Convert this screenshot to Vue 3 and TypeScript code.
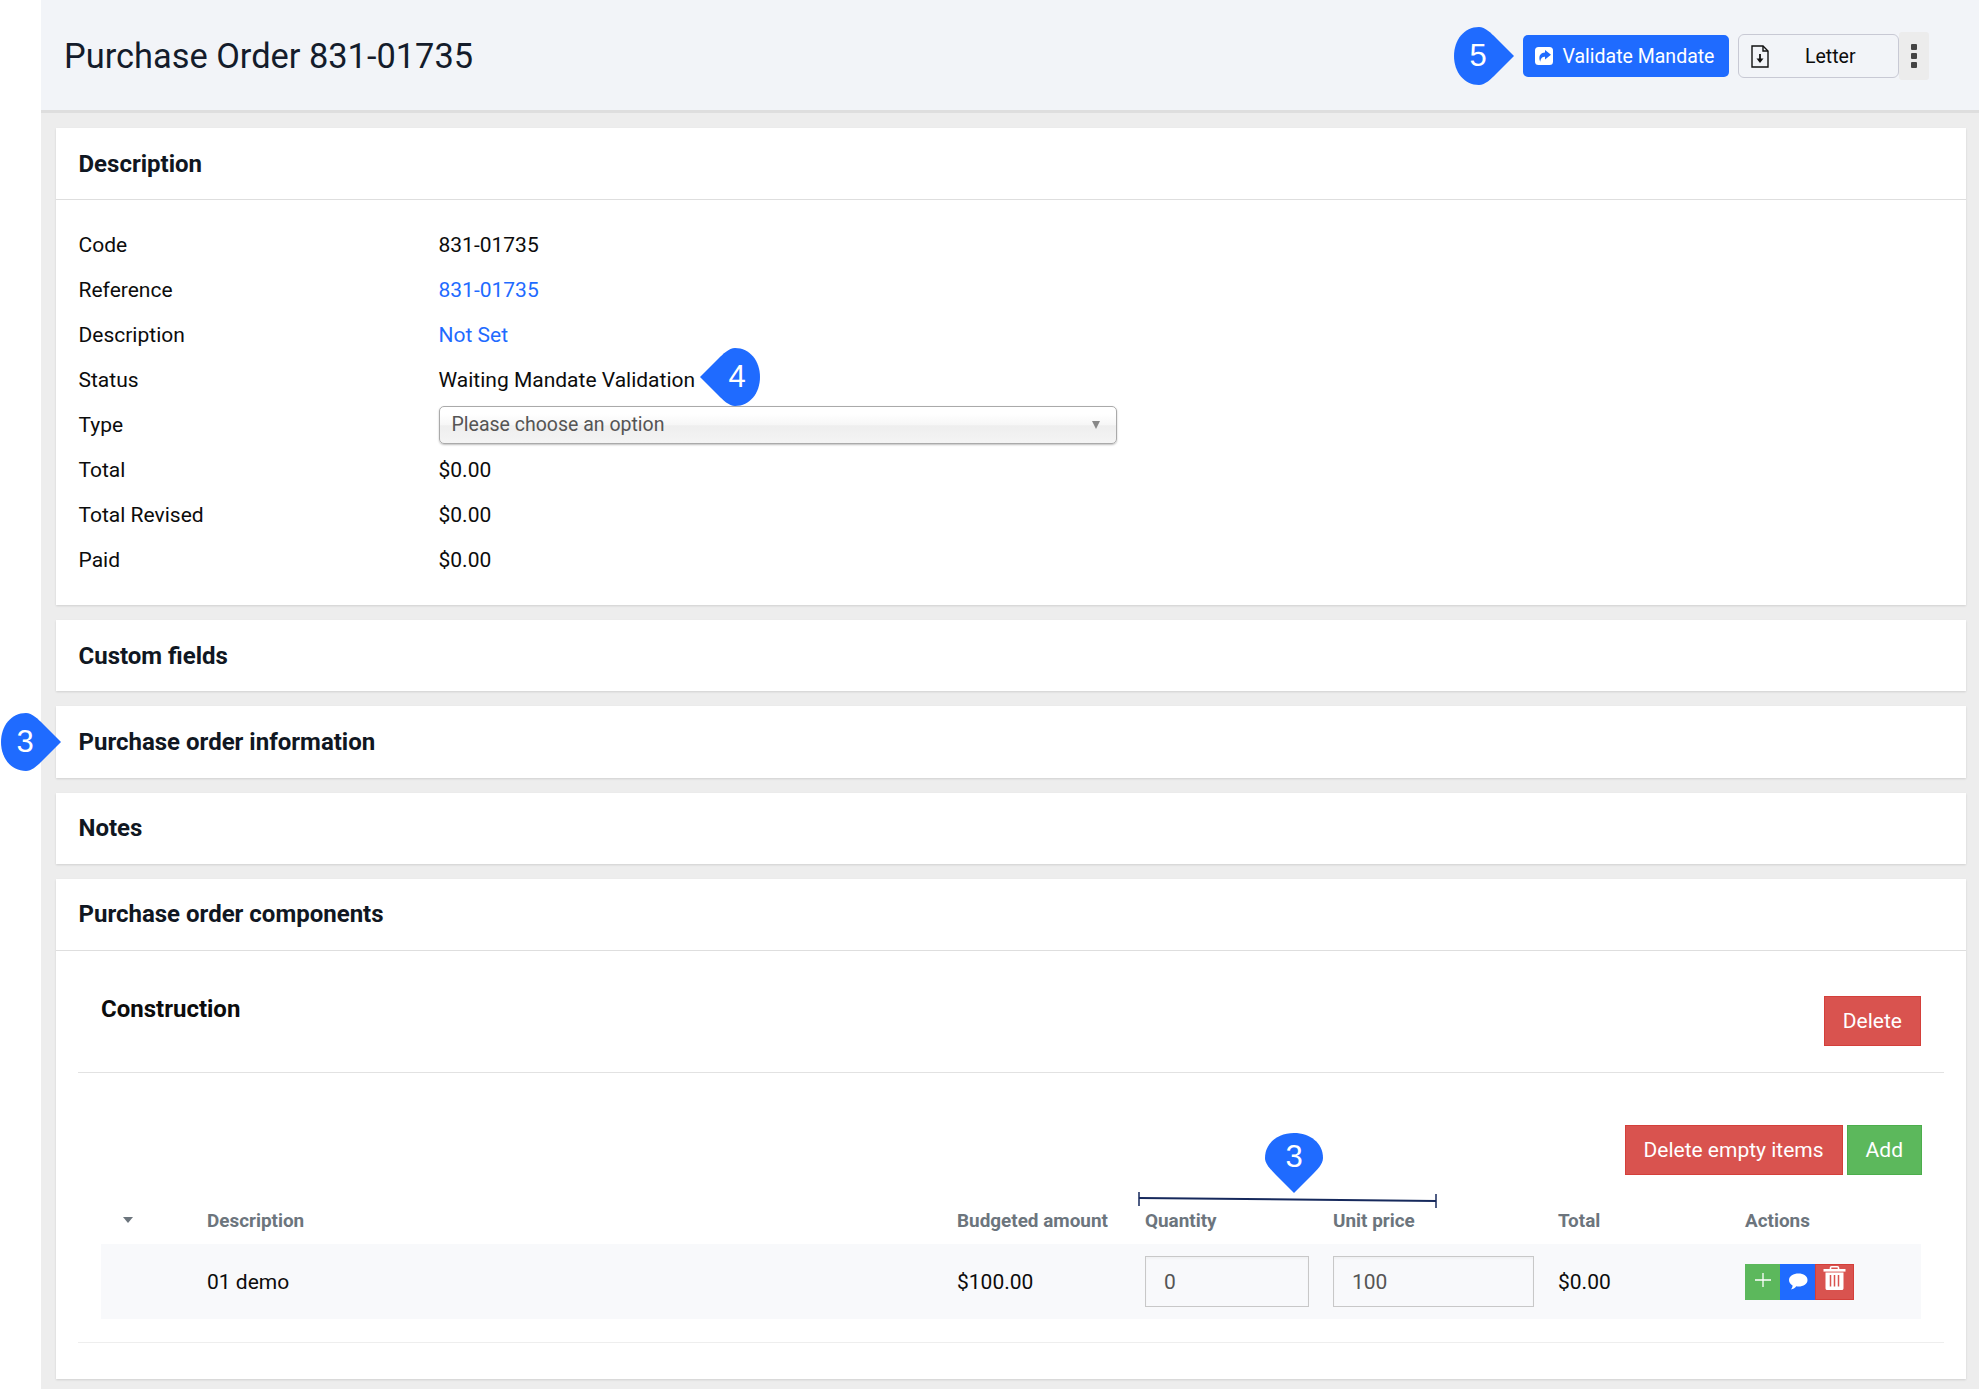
<script setup lang="ts">
const fields: { label: string; value: string; link?: boolean; select?: boolean }[] = [
  { label: 'Code', value: '831-01735' },
  { label: 'Reference', value: '831-01735', link: true },
  { label: 'Description', value: 'Not Set', link: true },
  { label: 'Status', value: 'Waiting Mandate Validation' },
  { label: 'Type', value: 'Please choose an option', select: true },
  { label: 'Total', value: '$0.00' },
  { label: 'Total Revised', value: '$0.00' },
  { label: 'Paid', value: '$0.00' }
]

const collapsed = ['Custom fields', 'Purchase order information', 'Notes']

const pinPath = 'M29 0C45 0 58 10 58 25C58 31 52 37 47 42L29 60L11 42C6 37 0 31 0 25C0 10 13 0 29 0Z'
</script>

<template>
  <div class="page">
    <aside class="rail"></aside>
    <main class="main">
      <header class="topbar">
        <h1>Purchase Order 831-01735</h1>
        <div class="top-actions">
          <div class="pin-slot">
            <div class="pin pin-right">
              <svg width="58" height="60" viewBox="0 0 58 60"><path :d="pinPath" /></svg>
              <span>5</span>
            </div>
          </div>
          <button class="btn-validate">
            <svg width="18" height="18" viewBox="0 0 18 18">
              <rect width="18" height="18" rx="3.5" fill="#fff" />
              <path d="M10 3l6 4.800-6 4.800V9.800C7.500 9.800 5.800 11 5.300 14.800 3 9.500 5.200 5.800 10 5.500Z" fill="#1f6bff" />
            </svg>
            Validate Mandate
          </button>
          <button class="btn-letter">
            <svg width="18" height="23" viewBox="0 0 18 23" fill="none" stroke="#111" stroke-width="1.4">
              <path d="M1 1h11L17 6V22H1Z" />
              <path d="M12 1v5h5" />
              <path d="M9 9v6" stroke-width="1.800" />
              <path d="M5.500 13.500h7L9 18Z" fill="#111" stroke="none" />
            </svg>
            <span>Letter</span>
          </button>
          <div class="kebab"><i></i><i></i><i></i></div>
        </div>
      </header>

      <div class="panels">
        <section class="panel">
          <h2 class="panel-head bordered">Description</h2>
          <div class="fields">
            <div v-for="f in fields" :key="f.label" class="field">
              <span class="field-label">{{ f.label }}</span>
              <div v-if="f.select" class="select">
                {{ f.value }}
                <span class="select-arrow"></span>
              </div>
              <span v-else class="field-value" :class="{ link: f.link }">
                {{ f.value }}
                <div v-if="f.label === 'Status'" class="pin pin-left">
                  <svg width="58" height="60" viewBox="0 0 58 60"><path :d="pinPath" /></svg>
                  <span>4</span>
                </div>
              </span>
            </div>
          </div>
        </section>

        <section v-for="title in collapsed" :key="title" class="panel">
          <h2 class="panel-head">
            {{ title }}
            <div v-if="title === 'Purchase order information'" class="pin pin-side">
              <svg width="58" height="60" viewBox="0 0 58 60"><path :d="pinPath" /></svg>
              <span>3</span>
            </div>
          </h2>
        </section>

        <section class="panel">
          <h2 class="panel-head bordered">Purchase order components</h2>
          <div class="component">
            <div class="component-head">
              <h3>Construction</h3>
              <button class="btn btn-red">Delete</button>
            </div>

            <div class="toolbar">
              <button class="btn btn-red">Delete empty items</button>
              <button class="btn btn-green">Add</button>
            </div>

            <div class="grid grid-head">
              <span class="caret"></span>
              <span>Description</span>
              <span>Budgeted amount</span>
              <span>Quantity</span>
              <span>Unit price</span>
              <span>Total</span>
              <span>Actions</span>
            </div>
            <div class="grid grid-row">
              <span></span>
              <span>01 demo</span>
              <span>$100.00</span>
              <div class="input">0</div>
              <div class="input">100</div>
              <span>$0.00</span>
              <div class="row-actions">
                <button class="act green">
                  <svg width="16" height="14" viewBox="0 0 16 14"><path d="M8 0v14M0 7h16" stroke="#fff" stroke-width="1.300" /></svg>
                </button>
                <button class="act blue">
                  <svg width="20" height="17" viewBox="0 0 20 17"><path d="M10.500 0.500c5 0 9 2.600 9 6.500s-4 6.500-9 6.500c-.8 0-1.500-.1-2.200-.2C7 15 5 16.300 2.800 16.500c1-1 1.700-2.300 1.800-4C2.600 11.300 1 9.300 1 7 1 3.100 5.500 0.500 10.500 0.500Z" fill="#fff" /></svg>
                </button>
                <button class="act red">
                  <svg class="trash" width="23" height="24" viewBox="0 0 23 24">
                    <path d="M7.500 3V1.800C7.500 1.200 8 .8 8.600 .8h5.800c.6 0 1.100.4 1.100 1v1.200" fill="none" stroke="#fff" stroke-width="1.600" />
                    <path d="M0.500 3h22v2.600H.5Z" fill="#fff" />
                    <path d="M2.500 6.500h18v15.700c0 1-.7 1.800-1.700 1.800H4.200c-1 0-1.700-.8-1.700-1.800Z" fill="#fff" />
                    <path d="M7.500 9v11.500M11.500 9v11.500M15.500 9v11.500" stroke="#d9534f" stroke-width="1.500" />
                  </svg>
                </button>
              </div>
            </div>

            <div class="bracket">
              <svg width="300" height="18" viewBox="0 0 300 18" fill="none" stroke="#16295c">
                <path d="M1 6l297 3" stroke-width="2" />
                <path d="M1 0v14M298 2v14" stroke-width="1.500" />
              </svg>
              <div class="pin pin-down">
                <svg width="58" height="60" viewBox="0 0 58 60"><path :d="pinPath" /></svg>
                <span>3</span>
              </div>
            </div>
          </div>
        </section>
      </div>
    </main>
  </div>
</template>

<style>
html, body {
  margin: 0;
  background: #fff;
}
</style>

<style scoped>
.page {
  display: grid;
  grid-template-columns: 41px 1fr;
  height: 1389px;
  overflow: hidden;
  font-family: Roboto, "Liberation Sans", sans-serif;
  font-size: 21px;
  color: #0c0c0c;
}

.rail {
  background: #fff;
}

.main {
  background: #ededed;
  position: relative;
}

.topbar {
  box-sizing: border-box;
  height: 113px;
  padding: 2px 50px 0 23px;
  border-bottom: 3px solid #dedede;
  background: #f2f4f8;
  display: flex;
  align-items: center;
  justify-content: space-between;
}

.topbar h1 {
  margin: 0;
  font-size: 34.4px;
  font-weight: 400;
  color: #141c2b;
}

.top-actions {
  display: flex;
  align-items: center;
}

.pin-slot {
  position: relative;
  width: 0;
  height: 60px;
}

.pin {
  position: absolute;
  width: 58px;
  height: 60px;
  display: flex;
  align-items: center;
  justify-content: center;
}

.pin svg {
  position: absolute;
  left: 0;
  top: 0;
  fill: #1f6bff;
}

.pin span {
  position: relative;
  color: #fff;
  font-size: 31px;
  font-weight: 400;
  font-family: "Liberation Sans", sans-serif;
}

.pin-right {
  left: -68px;
  top: 0;
}

.pin-right svg,
.pin-side svg {
  transform: rotate(-90deg);
}

.pin-right span,
.pin-side span {
  left: -6px;
}

.pin-left svg {
  transform: rotate(90deg);
}

.pin-left span {
  left: 7px;
}

.pin-left {
  left: 100%;
  top: -21px;
  margin-left: 6px;
}

.pin-side {
  left: -54px;
  top: 6px;
}

.pin-down {
  left: 127px;
  top: -58px;
}

.pin-down span {
  top: -6px;
}

.btn-validate {
  display: flex;
  align-items: center;
  gap: 9.5px;
  height: 42px;
  width: 206px;
  padding: 0 12px;
  border: 0;
  border-radius: 5px;
  background: #1f6bff;
  color: #fff;
  font: 400 19.5px Roboto, sans-serif;
  white-space: nowrap;
}

.btn-letter {
  display: flex;
  align-items: center;
  height: 44px;
  width: 161px;
  margin-left: 9px;
  padding: 0 12px;
  border: 1px solid #c8c9d4;
  border-radius: 6px;
  background: #f2f4f8;
  color: #0c0c0c;
  font: 400 19.5px Roboto, sans-serif;
}

.btn-letter span {
  margin-left: 36px;
}

.kebab {
  width: 30px;
  height: 48px;
  background: #ececec;
  border-radius: 3px;
  display: flex;
  flex-direction: column;
  align-items: center;
  justify-content: center;
  gap: 3px;
}

.kebab i {
  width: 6px;
  height: 6px;
  background: #444;
  border-radius: 1px;
}

.panels {
  display: flex;
  flex-direction: column;
  gap: 15px;
  padding: 15px 13px 0 15px;
}

.panel {
  background: #fff;
  box-shadow: 0 1px 2px rgba(0, 0, 0, 0.12);
}

.panel-head {
  position: relative;
  box-sizing: border-box;
  margin: 0;
  height: 71.33px;
  padding: 0 22.5px;
  display: flex;
  align-items: center;
  font-size: 24px;
  font-weight: 700;
  color: #101722;
}

.bordered {
  height: 72px;
  border-bottom: 1px solid #dedede;
}

.fields {
  padding: 22px 22.5px 23px;
}

.field {
  display: flex;
  align-items: center;
  height: 45px;
}

.field-label {
  width: 360px;
  flex: none;
}

.field-value {
  position: relative;
}

.link {
  color: #1f6bff;
}

.select {
  position: relative;
  box-sizing: border-box;
  width: 678px;
  height: 38px;
  padding: 0 12px;
  display: flex;
  align-items: center;
  border: 1px solid #aaa;
  border-radius: 5px;
  background: linear-gradient(#fff 20%, #f6f6f6 50%, #eee 52%, #f4f4f4);
  box-shadow: 0 1px 2px rgba(0, 0, 0, 0.25);
  color: #555;
  font-size: 19.5px;
}

.select-arrow {
  position: absolute;
  right: 16px;
  top: 14px;
  border-left: 4px solid transparent;
  border-right: 4px solid transparent;
  border-top: 8px solid #888;
}

.component {
  position: relative;
  margin: 0 22px;
  padding: 45.5px 0 36px;
}

.component-head {
  display: flex;
  justify-content: space-between;
  align-items: flex-start;
  padding: 0 23px 26px 23px;
  border-bottom: 1px solid #e2e2e2;
}

.component-head h3 {
  margin: 0;
  font-size: 24px;
  font-weight: 700;
  line-height: 26px;
}

.btn {
  height: 50px;
  padding: 0 18px;
  border: 1px solid;
  color: #fff;
  font: 400 21px Roboto, sans-serif;
}

.btn-red {
  background: #d9534f;
  border-color: #d43f3a;
}

.btn-green {
  background: #5cb85c;
  border-color: #4cae4c;
}

.toolbar {
  display: flex;
  justify-content: flex-end;
  gap: 4px;
  margin-top: 52px;
  padding-right: 22px;
}

.grid {
  display: grid;
  grid-template-columns: 106px 750px 188px 188px 225px 187px 176px;
  margin: 0 23px;
  align-items: center;
}

.grid-head {
  height: 69px;
  align-items: end;
  padding-bottom: 12px;
  box-sizing: border-box;
  font-size: 18.9px;
  font-weight: 700;
  color: #6c757d;
}

.caret {
  justify-self: center;
  align-self: end;
  margin: 0 0 9px 0;
  position: relative;
  left: -26px;
  border-left: 5.5px solid transparent;
  border-right: 5.5px solid transparent;
  border-top: 6.5px solid #6c757d;
}

.grid-row {
  height: 75px;
  background: #f8f9fb;
}

.input {
  box-sizing: border-box;
  height: 51px;
  padding: 0 18px;
  margin-right: 24px;
  display: flex;
  align-items: center;
  border: 1px solid #c8c8c8;
  background: #f8f9fb;
  box-shadow: inset 0 2px 2px rgba(0, 0, 0, 0.03);
  color: #555;
}

.row-actions {
  display: flex;
  height: 36px;
}

.act {
  border: 0;
  padding: 0;
  display: flex;
  align-items: center;
  justify-content: center;
}

.green {
  width: 35px;
  background: #5cb85c;
}

.green svg {
  margin-bottom: 4px;
}

.blue {
  width: 35px;
  background: #1f6bff;
}

.red {
  width: 39px;
  background: #d9534f;
  border: 1px solid #d43f3a;
}

.trash {
  margin-top: -7px;
}

.bracket {
  position: absolute;
  left: 1060px;
  top: 240px;
  width: 300px;
  height: 18px;
}

.component::after {
  content: "";
  display: block;
  height: 1px;
  margin: 23px 0 0;
  background: #eee;
}
</style>
